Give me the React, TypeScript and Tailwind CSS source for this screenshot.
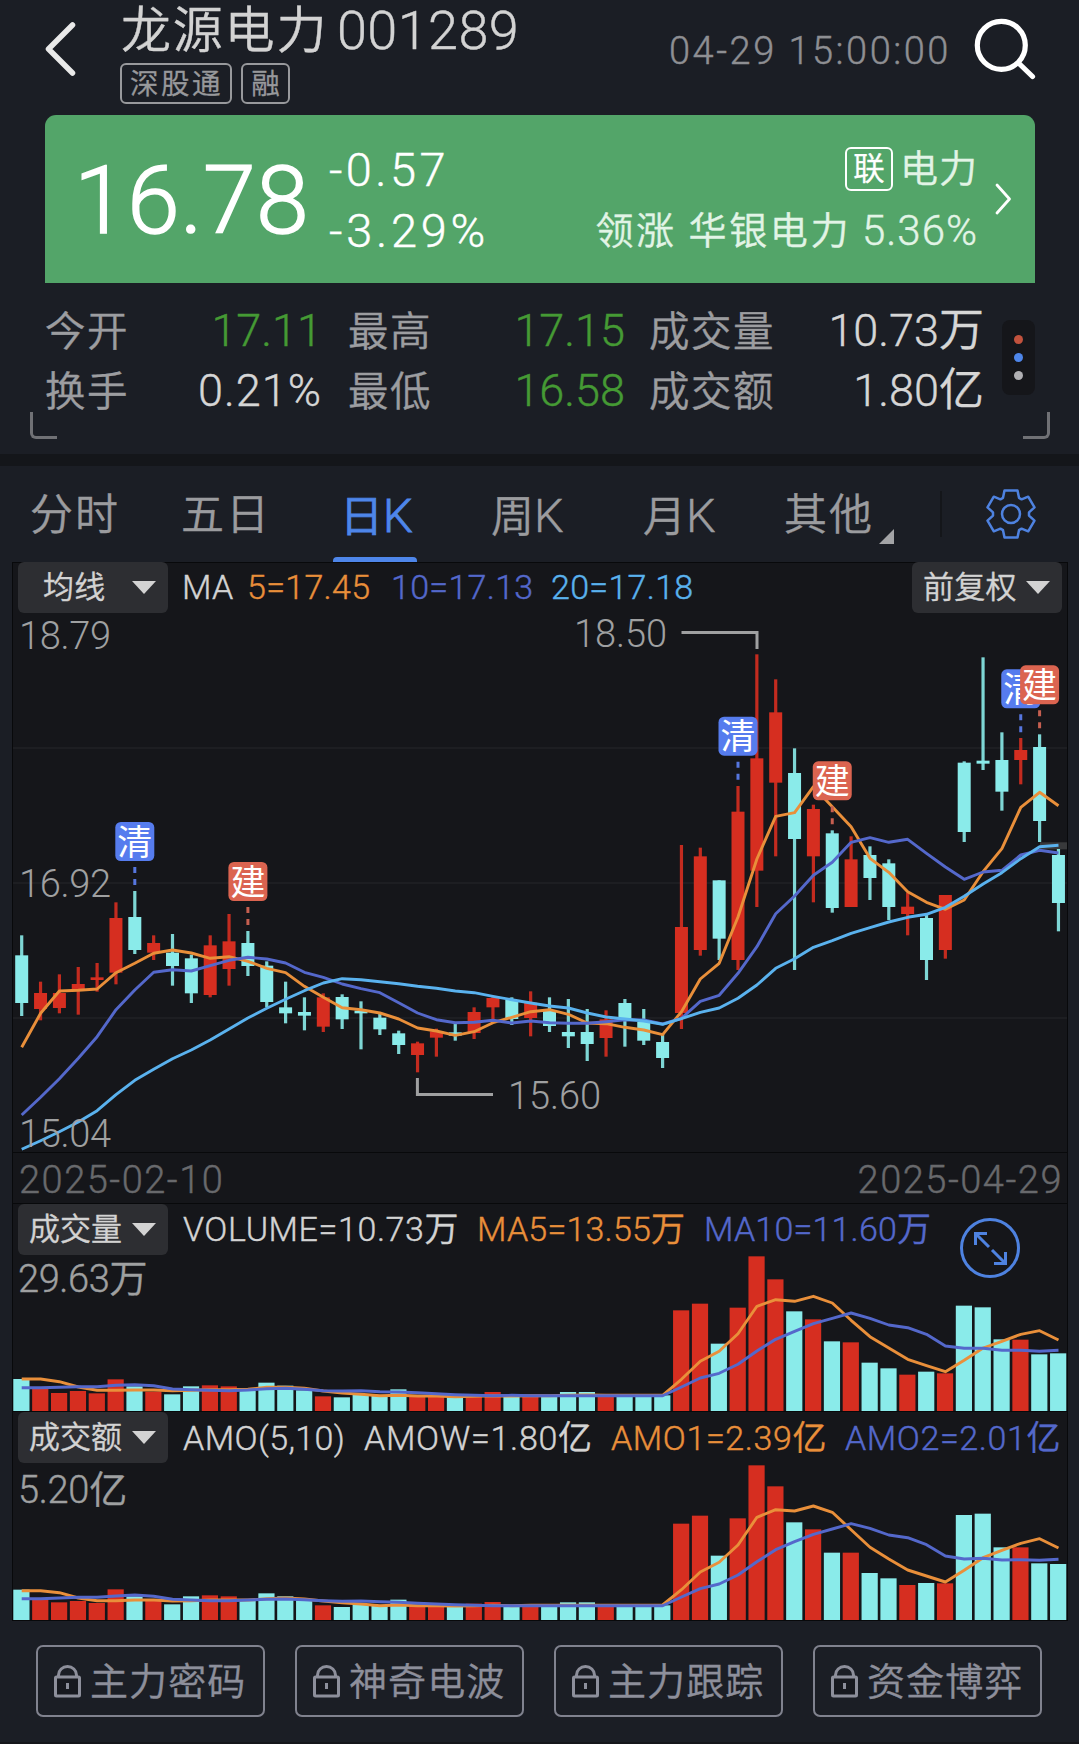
import React from "react";

type Candle = [number, number, number, number];

const STEP = 18.85;
const FIRST_X = 8.7;
const RED = "#d62e20";
const CYAN = "#8aebea";
const ORANGE = "#e98f3a";
const INDIGO = "#5468cb";
const SKY = "#5ab2ee";

const UP_DAYS = new Set([
  1, 2, 3, 4, 5, 7, 10, 11, 16, 21, 22, 24, 25, 27, 31, 35, 36, 38, 39, 40, 42, 44, 47, 49, 53,
]);

// high, body top, body bottom, low, in thirds of a pixel
const CANDLES: Candle[] = [
  [976, 1036, 1179, 1218], [1115, 1149, 1197, 1231], [1093, 1149, 1194, 1210], [1071, 1122, 1138, 1214],
  [1059, 1102, 1110, 1145], [877, 924, 1088, 1123], [843, 921, 1020, 1032], [976, 999, 1028, 1050],
  [972, 1028, 1068, 1127], [1034, 1045, 1150, 1179], [976, 1006, 1155, 1162], [912, 994, 1077, 1127],
  [963, 999, 1068, 1098], [1054, 1067, 1176, 1192], [1115, 1192, 1210, 1240], [1162, 1206, 1217, 1261],
  [1150, 1162, 1250, 1266], [1153, 1161, 1228, 1257], [1174, 1202, 1210, 1318], [1212, 1223, 1258, 1275],
  [1262, 1270, 1305, 1332], [1295, 1300, 1335, 1387], [1256, 1264, 1283, 1340], [1242, 1267, 1277, 1292],
  [1192, 1206, 1269, 1287], [1160, 1164, 1192, 1228], [1162, 1170, 1227, 1245], [1144, 1178, 1224, 1279],
  [1162, 1200, 1248, 1266], [1167, 1266, 1279, 1314], [1197, 1266, 1302, 1353], [1201, 1228, 1284, 1340],
  [1167, 1179, 1228, 1310], [1197, 1236, 1292, 1305], [1270, 1296, 1344, 1374], [705, 951, 1209, 1257],
  [713, 739, 1020, 1037], [811, 811, 986, 1050], [528, 605, 1050, 1080], [133, 445, 782, 891],
  [208, 307, 518, 739], [415, 489, 687, 1080], [584, 597, 739, 877], [661, 670, 894, 908],
  [679, 748, 891, 891], [709, 735, 804, 870], [748, 760, 891, 930], [848, 890, 912, 976],
  [912, 924, 1050, 1110], [855, 855, 1020, 1046], [454, 458, 666, 696], [142, 452, 461, 480],
  [367, 450, 545, 602], [384, 420, 450, 523], [373, 411, 633, 696], [717, 735, 879, 964],
];

const MA5 = [
  1312, 1210, 1143, 1141, 1137, 1088, 1060, 1030, 1020, 1029, 1045, 1040, 1054, 1075, 1088, 1129, 1162, 1193,
  1199, 1209, 1227, 1254, 1263, 1276, 1265, 1238, 1222, 1205, 1199, 1213, 1239, 1241, 1252, 1260, 1274, 1205,
  1107, 1060, 921, 747, 619, 608, 530, 590, 650, 745, 787, 845, 877, 898, 870, 785, 716, 592, 547, 587,
];
const MA10 = [
  1515, 1462, 1406, 1345, 1280, 1199, 1140, 1087, 1079, 1083, 1067, 1051, 1042, 1047, 1059, 1087, 1102, 1122,
  1136, 1148, 1178, 1209, 1229, 1238, 1237, 1231, 1239, 1233, 1238, 1240, 1240, 1235, 1229, 1230, 1242, 1225,
  1174, 1156, 1090, 1010, 911, 858, 796, 757, 697, 683, 697, 688, 730, 771, 808, 786, 781, 735, 721, 729,
];
const MA20 = [
  1618, 1592, 1565, 1536, 1502, 1454, 1411, 1378, 1346, 1320, 1290, 1257, 1224, 1195, 1168, 1142, 1119, 1106,
  1109, 1115, 1121, 1129, 1135, 1143, 1148, 1159, 1169, 1179, 1188, 1194, 1209, 1221, 1227, 1233, 1243, 1226,
  1207, 1194, 1165, 1125, 1075, 1046, 1012, 992, 970, 953, 936, 922, 913, 892, 859, 822, 788, 746, 710, 706,
];

// bar heights and averages, in thirds of a pixel above the baseline
const VOLUME = [
  96, 66, 54, 60, 53, 95, 74, 58, 50, 74, 77, 74, 60, 85, 76, 62, 44, 41, 49, 45, 65, 46, 42, 43, 49, 57, 42, 45,
  44, 57, 57, 42, 42, 42, 47, 302, 322, 202, 310, 464, 395, 299, 275, 209, 206, 145, 128, 109, 118, 113, 316,
  311, 215, 214, 170, 173,
];
const VOLUME_5 = [
  96, 96, 88, 72, 62, 62, 63, 63, 61, 62, 64, 64, 65, 71, 71, 68, 60, 54, 50, 46, 47, 45, 45, 43, 44, 46, 45, 46,
  46, 47, 48, 47, 47, 47, 47, 95, 149, 179, 232, 314, 334, 329, 344, 324, 272, 223, 189, 155, 136, 118, 152,
  189, 209, 230, 241, 213,
];
const VOLUME_10 = [
  70, 70, 71, 73, 73, 77, 79, 76, 66, 64, 62, 61, 63, 67, 68, 65, 61, 60, 61, 58, 57, 55, 52, 49, 47, 46, 47, 46,
  46, 46, 46, 46, 46, 46, 46, 72, 99, 113, 140, 180, 215, 239, 262, 278, 294, 278, 258, 250, 230, 195, 188,
  188, 182, 182, 179, 182,
];
const AMOUNT = [
  91, 61, 53, 57, 51, 92, 71, 57, 47, 71, 74, 71, 57, 80, 71, 59, 44, 39, 47, 45, 61, 44, 40, 42, 49, 54, 41, 45,
  44, 53, 53, 39, 40, 40, 44, 289, 313, 193, 305, 464, 401, 293, 272, 202, 202, 141, 125, 105, 111, 110, 315,
  319, 218, 218, 170, 168,
];
const AMOUNT_5 = [
  88, 88, 82, 66, 58, 58, 60, 60, 57, 58, 60, 60, 60, 64, 66, 63, 57, 52, 48, 43, 45, 43, 43, 42, 43, 44, 43, 44,
  44, 44, 44, 44, 44, 44, 45, 91, 144, 173, 225, 308, 331, 327, 342, 323, 271, 218, 183, 150, 132, 114, 149,
  187, 209, 230, 244, 216,
];
const AMOUNT_10 = [
  64, 64, 66, 68, 68, 72, 75, 71, 62, 60, 58, 58, 60, 62, 63, 61, 58, 56, 57, 55, 53, 50, 48, 46, 44, 43, 43, 43,
  43, 43, 43, 43, 43, 43, 43, 69, 94, 108, 135, 175, 211, 235, 257, 273, 289, 275, 255, 247, 226, 192, 183,
  185, 180, 181, 179, 182,
];

const xAt = (i: number) => FIRST_X + i * STEP;
const toPoints = (values: number[], toY: (v: number) => number) =>
  values.map((v, i) => `${xAt(i).toFixed(1)},${toY(v).toFixed(1)}`).join(" ");

function Line({ values, toY, color }: { values: number[]; toY: (v: number) => number; color: string }) {
  return <polyline points={toPoints(values, toY)} fill="none" stroke={color} strokeWidth={2.9} strokeLinejoin="round" />;
}

const MARKS = [
  { i: 6, y: 209, kind: "清" },
  { i: 12, y: 249, kind: "建" },
  { i: 38, y: 103.7, kind: "清" },
  { i: 43, y: 148.3, kind: "建" },
  { i: 53, y: 56.3, kind: "清" },
  { i: 54, y: 52.3, kind: "建" },
];

function CandleChart() {
  const y = (v: number) => v / 3 - 3;
  return (
    <svg className="block" width={1054} height={539} viewBox="0 0 1054 539">
      {[135, 270, 405].map((g) => (
        <line key={g} x1={0} x2={1054} y1={g} y2={g} stroke="#202226" strokeWidth={1.3} />
      ))}
      <rect x={1027} y={229.3} width={27} height={7} fill="#38393b" />
      {CANDLES.map(([h, t, b, l], i) => {
        const c = UP_DAYS.has(i) ? RED : CYAN;
        return (
          <g key={i} fill={c}>
            <rect x={xAt(i) - 1.6} y={y(h)} width={3.2} height={(l - h) / 3} opacity={0.9} />
            <rect x={xAt(i) - 6.5} y={y(t)} width={13} height={(b - t) / 3} />
          </g>
        );
      })}
      <Line values={MA5} toY={y} color={ORANGE} />
      <Line values={MA10} toY={y} color={INDIGO} />
      <Line values={MA20} toY={y} color={SKY} />
      <g fill="none" stroke="#9fa0a1" strokeWidth={3}>
        <path d="M668.500 19.500H744V36" />
        <path d="M404.400 465V481.500H480" />
      </g>
      <g fill="#9fa0a1" fontSize={38}>
        <text x={6} y={36} textLength={92}>18.79</text>
        <text x={6} y={284} textLength={92}>16.92</text>
        <text x={6} y={534} textLength={92}>15.04</text>
        <text x={561} y={34} textLength={93}>18.50</text>
        <text x={495} y={496} textLength={93}>15.60</text>
      </g>
      {MARKS.map(({ i, y: top, kind }) => {
        const blue = kind === "清";
        return (
          <g key={i}>
            <path
              d={`M${xAt(i)} ${top + 45}v6m0 6v6`}
              stroke={blue ? "#5676df" : "#c65f50"}
              strokeWidth={3}
            />
            <rect x={xAt(i) - 19.5} y={top} width={39} height={39} rx={5.5} fill={blue ? "#567cee" : "#db6450"} />
            <text x={xAt(i)} y={top + 32.5} textAnchor="middle" fontSize={35} fill="#fff" fontWeight={400}>
              {kind}
            </text>
          </g>
        );
      })}
    </svg>
  );
}

function BarChart({ bars, ma5, ma10, height }: { bars: number[]; ma5: number[]; ma10: number[]; height: number }) {
  const y = (v: number) => height - v / 3;
  return (
    <svg className="block" width={1054} height={height} viewBox={`0 0 1054 ${height}`}>
      {bars.map((v, i) => (
        <rect key={i} x={xAt(i) - 8.4} y={y(v)} width={16.2} height={v / 3} fill={UP_DAYS.has(i) ? RED : CYAN} />
      ))}
      <Line values={ma5} toY={y} color={ORANGE} />
      <Line values={ma10} toY={y} color={INDIGO} />
    </svg>
  );
}

function Dropdown({ label, className = "" }: { label: string; className?: string }) {
  return (
    <button
      className={`flex h-[51px] w-[150px] shrink-0 items-center justify-between rounded-md bg-[#2d2e32] pr-[12px] text-[31px] text-[#d3d3d3] ${className}`}
    >
      <span className="leading-[53px]">{label}</span>
      <svg width={24} height={13} viewBox="0 0 24 13">
        <path d="M0 0H24L12 13Z" fill="#d3d3d3" />
      </svg>
    </button>
  );
}

function Stat({ label, value, color = "text-[#d6d6d6]", className }: { label: string; value: string; color?: string; className: string }) {
  return (
    <div className={`flex justify-between ${className}`}>
      <span className="pt-px text-[40.500px] tracking-[1.500px] text-[#9c9da0]">{label}</span>
      <span className={`text-[45px] ${color}`}>{value}</span>
    </div>
  );
}

function LockButton({ label }: { label: string }) {
  return (
    <button className="flex h-[72px] w-[229px] items-center rounded-[7px] border-2 border-[#80828e] pl-[16px] text-[#8d8f9b]">
      <svg width={27} height={33} viewBox="0 0 27 33" fill="none" stroke="currentColor" strokeWidth={3}>
        <path d="M4.500 12V10A9 8.500 0 0 1 22.500 10V12" />
        <rect x={1.5} y={12} width={24} height={19} rx={1} fill="#17191f" />
        <path d="M13.500 18v6" />
      </svg>
      <span className="ml-[9px] pt-[3px] text-[38px] leading-[65px] tracking-[1.100px]">{label}</span>
    </button>
  );
}

export default function App() {
  return (
    <div className="h-[1744px] w-[1079px] overflow-hidden whitespace-nowrap bg-[#1b1e25] font-[Roboto,'Noto_Sans_CJK_SC',sans-serif] font-[350] text-[#d3d3d3] [-webkit-text-stroke-width:0.4px]">
      <header className="flex h-[115px]">
        <svg className="mt-[20px] ml-[44px]" width={32} height={58} viewBox="0 0 32 58">
          <path d="M28.500 5L4.500 29L28.500 53" fill="none" stroke="#e9e9e9" strokeWidth={5.5} strokeLinecap="round" strokeLinejoin="round" />
        </svg>
        <div className="ml-[44px] w-[500px]">
          <h1 className="flex h-[60px]">
            <span className="w-[217px] pl-px text-[50px] leading-[63px] tracking-[1.800px]">龙源电力</span>
            <span className="text-[54px] leading-[62px] tracking-[0.400px]">001289</span>
          </h1>
          <div className="mt-[3px] flex gap-[9px] text-[28.500px] leading-[39px] text-[#98999c]">
            <span className="h-[41px] w-[112px] rounded-[6px] border-2 border-[#98999c] pl-[8px] tracking-[2.500px]">深股通</span>
            <span className="h-[41px] w-[49px] rounded-[6px] border-2 border-[#98999c] text-center">融</span>
          </div>
        </div>
        <time className="ml-[49px] w-[304px] text-[38px] leading-[102px] tracking-[2.500px] text-[#8e8f93]">04-29 15:00:00</time>
        <svg className="mt-[18px]" width={64} height={64} viewBox="0 0 64 64" fill="none" stroke="#fff" strokeWidth={5.2} strokeLinecap="round">
          <circle cx={28.3} cy={27.3} r={24} />
          <path d="M45.500 45L59.500 58.500" />
        </svg>
      </header>

      <section className="ml-[45px] flex h-[168px] w-[990px] rounded-t-[11px] bg-[#53a569] text-white">
        <div className="w-[284px] pl-[29px] text-[95px] leading-[171px] tracking-[0.300px] [-webkit-text-stroke-width:1.5px]">16.78</div>
        <div className="pt-[24px] text-[47px] leading-[61px]">
          <div className="tracking-[3.400px]">-0.57</div>
          <div className="tracking-[3.700px]">-3.29%</div>
        </div>
        <div className="mr-[17px] ml-auto pt-[23px] text-[#e2f4e6]">
          <div className="flex h-[61px] items-center justify-end">
            <span className="mr-[7px] h-[44px] w-[48px] rounded-[6px] border-2 text-center text-[31.500px] leading-[42px] text-white">联</span>
            <span className="pt-[2px] text-[38px] tracking-[1px]">电力</span>
          </div>
          <div className="flex h-[61px] items-center justify-end">
            <span className="pt-[3px] text-[38px] tracking-[2.600px]">领涨</span>
            <span className="ml-[12px] pt-[3px] text-[38px] tracking-[2.600px]">华银电力</span>
            <span className="ml-[11px] pt-px text-[42px] tracking-[1px]">5.36%</span>
          </div>
        </div>
        <svg className="mt-[68px] mr-[23px]" width={17} height={32} viewBox="0 0 17 32">
          <path d="M2 2L14.500 16L2 30" fill="none" stroke="#fff" strokeWidth={2.8} strokeLinecap="round" strokeLinejoin="round" />
        </svg>
      </section>

      <section className="relative h-[171px] pt-[18px]">
        <div className="ml-[45px] flex items-start">
          <div className="leading-[60px]">
            <div className="flex h-[60px]">
              <Stat label="今开" value="17.11" color="text-[#459a34]" className="w-[277px]" />
              <Stat label="最高" value="17.15" color="text-[#459a34]" className="ml-[26px] w-[277px]" />
              <Stat label="成交量" value="10.73万" className="ml-[24px] w-[335px]" />
            </div>
            <div className="flex h-[60px]">
              <Stat label="换手" value="0.21%" color="text-[#d6d6d6] tracking-[1px]" className="w-[277px]" />
              <Stat label="最低" value="16.58" color="text-[#459a34]" className="ml-[26px] w-[277px]" />
              <Stat label="成交额" value="1.80亿" className="ml-[24px] w-[335px]" />
            </div>
          </div>
          <div className="mt-[19px] ml-[18px] flex h-[75px] w-[33px] flex-col items-center justify-center gap-[9px] rounded-lg bg-[#15161a]">
            <i className="size-[9px] rounded-full bg-[#c1523d]" />
            <i className="size-[9px] rounded-full bg-[#4e86ea]" />
            <i className="size-[9px] rounded-full bg-[#b0b0b3]" />
          </div>
        </div>
        <i className="absolute bottom-[15px] left-[30px] size-[27px] rounded-bl-[6px] border-b-3 border-l-3 border-[#707175]" />
        <i className="absolute right-[29px] bottom-[15px] size-[27px] rounded-br-[6px] border-r-3 border-b-3 border-[#707175]" />
      </section>

      <div className="h-[12px] bg-[#14161a]" />

      <nav className="flex h-[96px] text-[43px] leading-[99px] text-[#9b9c9f]">
        <span className="ml-[30px] w-[151px] tracking-[2px]">分时</span>
        <span className="w-[152px] tracking-[2px]">五日</span>
        <span className="relative mr-[74px] w-[84px] pl-[7px] text-[#4e86ea] [-webkit-text-stroke-width:0.9px]">
          日<span className="text-[47px]">K</span>
          <i className="absolute bottom-0 left-0 h-[5px] w-[84px] rounded-t-sm bg-[#4e86ea]" />
        </span>
        <span className="w-[152px]">周<span className="text-[47px]">K</span></span>
        <span className="w-[141px]">月<span className="text-[47px]">K</span></span>
        <span className="tracking-[2px]">其他</span>
        <svg className="mt-[63px] ml-[5px]" width={15} height={15} viewBox="0 0 15 15">
          <path d="M15 0V15H0Z" fill="#a3a4a6" />
        </svg>
        <i className="mt-[25px] ml-[46px] h-[46px] w-[2px] bg-[#14161a]" />
        <svg className="mt-[23px] ml-[44px]" width={50} height={50} viewBox="-25 -25 50 50" fill="none" stroke="#4e82e0" strokeWidth={2.5} strokeLinejoin="round">
          <path d="M-6.500 -23.500H6.500L8 -16.200L10.600 -14.700L17.200 -17.300L23.500 -6.600L18 -1.600V1.600L23.500 6.600L17.200 17.300L10.600 14.700L8 16.200L6.500 23.500H-6.500L-8 16.200L-10.600 14.700L-17.200 17.300L-23.500 6.600L-18 1.600V-1.600L-23.500 -6.600L-17.200 -17.300L-10.600 -14.700L-8 -16.200Z" />
          <circle r={9} />
        </svg>
      </nav>

      <main className="ml-[12px] h-[1059px] w-[1056px] border border-t-0 border-[#08090b] bg-[#15161a]">
        <div className="flex h-[51px] pl-[5px] text-[34px] leading-[51px] tracking-[0.300px] shadow-[inset_0_1px_0_#08090b]">
          <Dropdown label="均线" className="pl-[25px]" />
          <span className="ml-[14px] w-[65px]">MA</span>
          <span className="w-[144px] text-[#e98f3a]">5=17.45</span>
          <span className="w-[160px] text-[#5468cb]">10=17.13</span>
          <span className="text-[#5ab2ee]">20=17.18</span>
          <Dropdown label="前复权" className="mr-[5px] ml-auto pl-[11px]" />
        </div>
        <CandleChart />
        <div className="flex h-[52px] justify-between border-y border-[#08090b] pr-[4px] pl-[6px] text-[38px] leading-[54px] tracking-[1.500px] text-[#68696c]">
          <span>2025-02-10</span>
          <span>2025-04-29</span>
        </div>

        <section className="relative">
          <div className="flex h-[51px] pl-[5px] text-[34px] leading-[51px]">
            <Dropdown label="成交量" className="pl-[11px]" />
            <span className="ml-[15px] w-[294px] tracking-[0.600px]">VOLUME=10.73万</span>
            <span className="w-[227px] tracking-[0.200px] text-[#e98f3a]">MA5=13.55万</span>
            <span className="tracking-[0.200px] text-[#5468cb]">MA10=11.60万</span>
          </div>
          <BarChart bars={VOLUME} ma5={VOLUME_5} ma10={VOLUME_10} height={156} />
          <span className="absolute top-[51px] left-[5px] text-[38px] leading-[48px] tracking-[-0.400px] text-[#9fa0a1]">29.63万</span>
          <svg className="absolute top-[14px] left-[947px]" width={61} height={61} viewBox="0 0 61 61" fill="none" stroke="#4e82e0" strokeWidth={3}>
            <circle cx={30} cy={30} r={28.5} />
            <path d="M27 15.500H15.500V27M15.500 15.500L29 29M32 32L45.500 45.500M45.500 34V45.500H34" />
          </svg>
        </section>

        <section className="relative border-t border-[#08090b]">
          <div className="flex h-[51px] pl-[5px] text-[34px] leading-[52px]">
            <Dropdown label="成交额" className="pl-[11px]" />
            <span className="ml-[15px] w-[181px] tracking-[0.400px]">AMO(5,10)</span>
            <span className="w-[247px] tracking-[0.700px]">AMOW=1.80亿</span>
            <span className="w-[234px] tracking-[0.600px] text-[#e98f3a]">AMO1=2.39亿</span>
            <span className="tracking-[0.600px] text-[#5468cb]">AMO2=2.01亿</span>
          </div>
          <BarChart bars={AMOUNT} ma5={AMOUNT_5} ma10={AMOUNT_10} height={157} />
          <span className="absolute top-[54px] left-[5px] text-[38px] leading-[48px] tracking-[-0.300px] text-[#9fa0a1]">5.20亿</span>
        </section>
      </main>

      <footer className="flex h-[123px] gap-[30px] border-b-2 border-[#15161a] pt-[24px] pl-[36px]">
        <LockButton label="主力密码" />
        <LockButton label="神奇电波" />
        <LockButton label="主力跟踪" />
        <LockButton label="资金博弈" />
      </footer>
    </div>
  );
}
